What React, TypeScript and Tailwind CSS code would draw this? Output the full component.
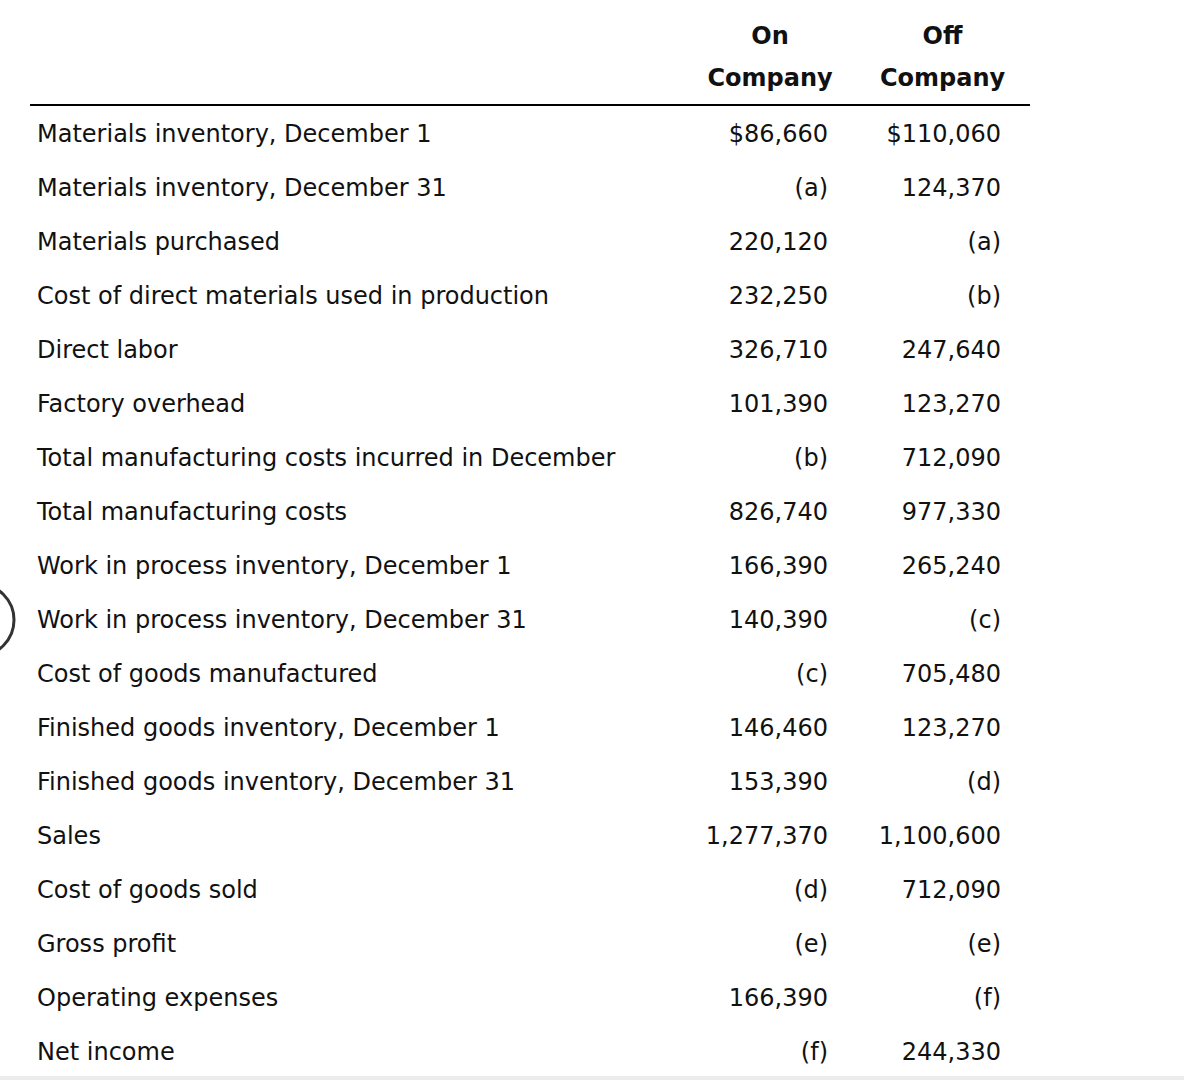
const rows: [string, string, string][] = [
  ["Materials inventory, December 1", "$86,660", "$110,060"],
  ["Materials inventory, December 31", "(a)", "124,370"],
  ["Materials purchased", "220,120", "(a)"],
  ["Cost of direct materials used in production", "232,250", "(b)"],
  ["Direct labor", "326,710", "247,640"],
  ["Factory overhead", "101,390", "123,270"],
  ["Total manufacturing costs incurred in December", "(b)", "712,090"],
  ["Total manufacturing costs", "826,740", "977,330"],
  ["Work in process inventory, December 1", "166,390", "265,240"],
  ["Work in process inventory, December 31", "140,390", "(c)"],
  ["Cost of goods manufactured", "(c)", "705,480"],
  ["Finished goods inventory, December 1", "146,460", "123,270"],
  ["Finished goods inventory, December 31", "153,390", "(d)"],
  ["Sales", "1,277,370", "1,100,600"],
  ["Cost of goods sold", "(d)", "712,090"],
  ["Gross profit", "(e)", "(e)"],
  ["Operating expenses", "166,390", "(f)"],
  ["Net income", "(f)", "244,330"],
];

export default function App() {
  return (
    <div className="relative w-[1184px] h-[1080px] overflow-hidden bg-white text-[#111] font-['DejaVu_Sans','Verdana',sans-serif] text-[24px]">
      {/* cut-off circle on the left edge */}
      <svg className="absolute left-0 top-[582px]" width="20" height="76" viewBox="0 0 20 76">
        <circle cx="-22" cy="38" r="36" fill="none" stroke="#333" strokeWidth="3" />
      </svg>

      <div className="ml-[30px] w-[1000px]">
        <div className="grid grid-cols-[658px_167px_175px] pt-[15px] pb-[5px] border-b-2 border-black font-bold leading-[42px]">
          <div />
          <div className="text-center pr-[3px]">
            On
            <br />
            Company
          </div>
          <div className="text-center">
            Off
            <br />
            Company
          </div>
        </div>

        <div className="pt-[1px]">
          {rows.map(([label, on, off]) => (
            <div key={label} className="grid grid-cols-[658px_167px_175px] h-[54px] items-center">
              <div className="pl-[7px] whitespace-nowrap">{label}</div>
              <div className="text-right pr-[27px] whitespace-nowrap">{on}</div>
              <div className="text-right pr-[29px] whitespace-nowrap">{off}</div>
            </div>
          ))}
        </div>
      </div>

      <div className="absolute left-0 bottom-0 w-full h-[4px] bg-[#ececec]" />
    </div>
  );
}
